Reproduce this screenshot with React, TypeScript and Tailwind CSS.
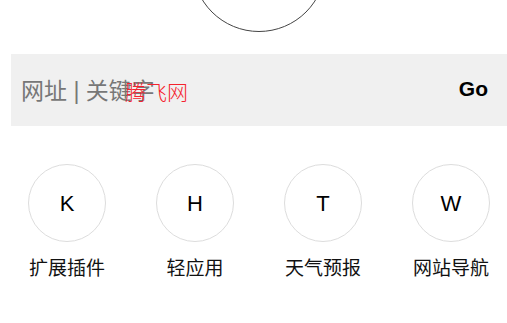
import React from "react";

const items = [
  { letter: "K", label: "扩展插件" },
  { letter: "H", label: "轻应用" },
  { letter: "T", label: "天气预报" },
  { letter: "W", label: "网站导航" },
];

export default function App() {
  return (
    <div
      className="w-[507px] h-[323px] overflow-hidden bg-white"
      style={{ fontFamily: '"Liberation Sans", "Noto Sans CJK SC", sans-serif' }}
    >
      <div className="pl-[11px] flex flex-col">
        <div className="flex justify-center">
          <div className="w-[134px] h-[134px] mt-[-102px] rounded-full border border-[#444] shrink-0" />
        </div>
        <div className="relative mt-[22px] h-[72px] bg-[#f0f0f0] flex items-center pl-[10px] pr-[19px]">
          <span className="flex-1 text-[23px] text-[#777] leading-none pt-[2px]">网址 | 关键字</span>
          <span className="text-[21px] font-bold text-black leading-none pb-[4px]">Go</span>
          <span className="absolute left-[114px] top-[28px] text-[21px] leading-none font-light text-[#f5222d]">
            腾飞网
          </span>
        </div>
      </div>
      <div className="flex pl-[3px] mt-[38px]">
        {items.map((it) => (
          <div key={it.letter} className="w-[128px] shrink-0 flex flex-col items-center">
            <div className="w-[78px] h-[78px] rounded-full border border-[#ddd] flex items-center justify-center text-[22px] text-black">
              {it.letter}
            </div>
            <div className="mt-[17px] text-[19px] leading-none text-[#111]">{it.label}</div>
          </div>
        ))}
      </div>
    </div>
  );
}
